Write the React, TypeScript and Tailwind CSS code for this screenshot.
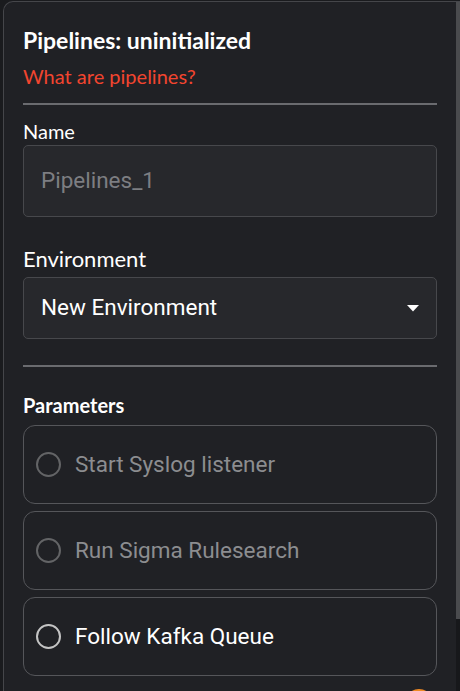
import React from 'react';

const params = [
  { label: 'Start Syslog listener', enabled: false },
  { label: 'Run Sigma Rulesearch', enabled: false },
  { label: 'Follow Kafka Queue', enabled: true },
];

export default function App() {
  return (
    <div className="h-[691px] w-[460px] overflow-hidden bg-[#1a1b1e] flex font-['Lato',sans-serif]">
      <div className="w-[3px] shrink-0" />
      <div className="relative flex-1 mt-px border-l border-t border-[#45464a] rounded-tl-[10px] bg-[#202125] flex">
        <div className="flex-1 pl-[19px] pr-[19px] pt-[24px]">
          <h1 className="text-[23px] leading-[28px] font-bold text-white">Pipelines: uninitialized</h1>
          <a className="block mt-[8px] text-[20px] leading-[28px] text-[#f2452f]">What are pipelines?</a>
          <div className="mt-[13px] h-[2px] bg-[#6a6b6f]" />

          <div className="mt-[15px] text-[20px] leading-[22px] text-white">Name</div>
          <div className="mt-[3px] h-[72px] rounded-[5px] border border-[#47484c] bg-[#27282c] flex items-center px-[17px]">
            <span className="font-['Roboto',sans-serif] text-[22.5px] text-[#7d7e82]">Pipelines_1</span>
          </div>

          <div className="mt-[28px] text-[22px] leading-[28px] text-white">Environment</div>
          <div className="mt-[4px] h-[62px] rounded-[5px] border border-[#47484c] bg-[#27282c] flex items-center justify-between pl-[17px] pr-[17px]">
            <span className="font-['Roboto',sans-serif] text-[22.5px] text-white">New Environment</span>
            <svg width="12" height="7" viewBox="0 0 12 7">
              <path d="M0 0 L12 0 L6 6.5 Z" fill="#ffffff" />
            </svg>
          </div>

          <div className="mt-[26px] h-[2px] bg-[#6a6b6f]" />

          <div className="mt-[27px] text-[20px] leading-[22px] font-bold text-white">Parameters</div>
          <div className="mt-[9px] flex flex-col gap-[7px]">
            {params.map((p) => (
              <div
                key={p.label}
                className="h-[79px] rounded-[12px] border border-[#55565a] flex items-center pl-[12px]"
              >
                <span
                  className={
                    p.enabled
                      ? 'w-[25px] h-[25px] rounded-full border-2 border-[#c4c4c4]'
                      : 'w-[25px] h-[25px] rounded-full border-2 border-[#636466]'
                  }
                />
                <span
                  className={
                    p.enabled
                      ? "ml-[14px] font-['Roboto',sans-serif] text-[22.5px] text-white"
                      : "ml-[14px] font-['Roboto',sans-serif] text-[22.5px] text-[#8c8d90]"
                  }
                >
                  {p.label}
                </span>
              </div>
            ))}
          </div>
        </div>
        <div className="w-[4px] shrink-0 flex flex-col">
          <div className="h-[617px] bg-[#4a4b4e]" />
          <div className="flex-1 bg-[#17181b]" />
        </div>
        <div className="absolute left-[401px] top-[687px] w-[28px] h-[28px] rounded-full bg-[#f08a24]" />
      </div>
    </div>
  );
}
